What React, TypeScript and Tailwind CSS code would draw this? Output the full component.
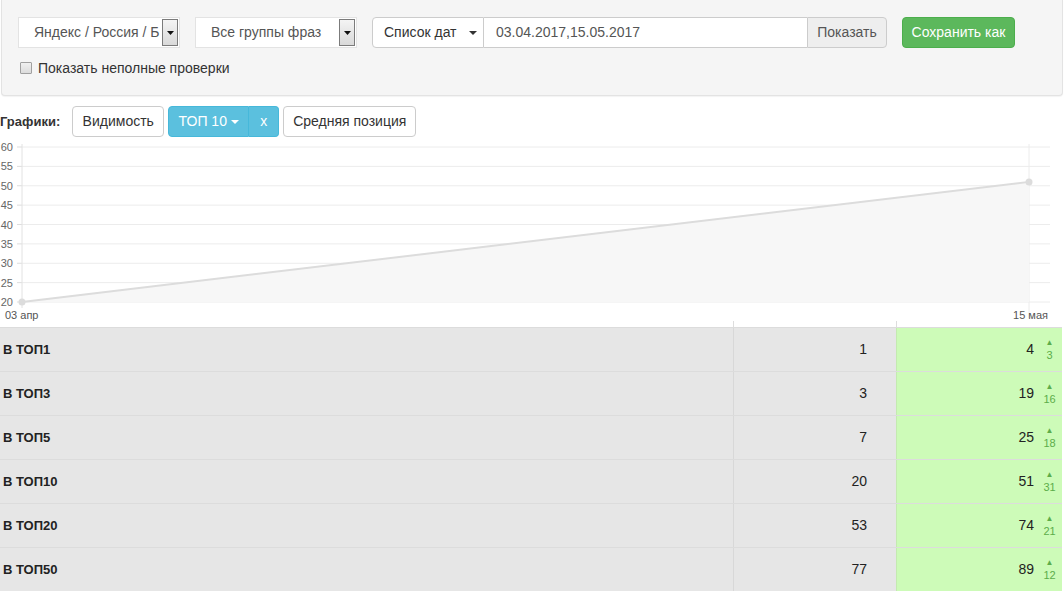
import React from "react";

const rows = [
  { name: "В ТОП1", a: "1", b: "4", d: "3" },
  { name: "В ТОП3", a: "3", b: "19", d: "16" },
  { name: "В ТОП5", a: "7", b: "25", d: "18" },
  { name: "В ТОП10", a: "20", b: "51", d: "31" },
  { name: "В ТОП20", a: "53", b: "74", d: "21" },
  { name: "В ТОП50", a: "77", b: "89", d: "12" },
];

function FakeSelect({ label, width }: { label: string; width: string }) {
  return (
    <div className={`relative h-[31px] ${width} bg-white border border-[#e3e3e3] flex items-center`}>
      <span className="pl-[15px] text-[14px] text-[#555]">{label}</span>
      <div className="absolute right-[1px] top-[1px] bottom-[1px] w-[16px] border border-[#7b7b7b] bg-gradient-to-b from-[#f4f4f4] to-[#d9d9d9] flex items-center justify-center">
        <svg width="7" height="4" viewBox="0 0 7 4">
          <path d="M0 0 L7 0 L3.5 4 Z" fill="#111" />
        </svg>
      </div>
    </div>
  );
}

function Chart() {
  const yLabels = [60, 55, 50, 45, 40, 35, 30, 25, 20];
  const y = (v: number) => 162 - (v - 20) * 3.875;
  const x0 = 22;
  const x1 = 1029;
  return (
    <div className="h-[181px] w-full">
      <svg width="1064" height="181" viewBox="0 0 1064 181" className="block">
        {yLabels.map((v) => (
          <g key={v}>
            <line x1={x0} x2={1050} y1={y(v)} y2={y(v)} stroke="#ececec" strokeWidth="1" />
            <line x1={17} x2={x0} y1={y(v)} y2={y(v)} stroke="#ddd" strokeWidth="1" />
            <text x={13} y={y(v) + 4} textAnchor="end" fontSize="11" fill="#666" fontFamily="'Liberation Sans', Arial, sans-serif">
              {v}
            </text>
          </g>
        ))}
        <line x1={x0} x2={x0} y1={4} y2={168} stroke="#e2e2e2" strokeWidth="1" />
        <line x1={x1} x2={x1} y1={4} y2={178} stroke="#ececec" strokeWidth="1" />
        <path d={`M${x0} ${y(20)} L${x1} ${y(51)} L${x1} ${y(20)} Z`} fill="#f7f7f7" />
        <line x1={x0} y1={y(20)} x2={x1} y2={y(51)} stroke="#dcdcdc" strokeWidth="2" />
        <circle cx={x0} cy={y(20)} r="3.5" fill="#dcdcdc" />
        <circle cx={x1} cy={y(51)} r="3.5" fill="#dcdcdc" />
        <text x={5} y={179} fontSize="11" fill="#555" fontFamily="'Liberation Sans', Arial, sans-serif">
          03 апр
        </text>
        <text x={1048} y={179} textAnchor="end" fontSize="11" fill="#555" fontFamily="'Liberation Sans', Arial, sans-serif">
          15 мая
        </text>
      </svg>
    </div>
  );
}

export default function App() {
  return (
    <div className="w-[1064px] h-[594px] overflow-hidden bg-white text-[#333]" style={{ fontFamily: "'Liberation Sans', Arial, sans-serif" }}>
      {/* Top panel */}
      <div className="h-[96px] ml-[1px] mr-[1px] bg-[#f5f5f5] border border-t-0 border-[#e3e3e3] rounded-b-[4px] shadow-[0_1px_1px_rgba(0,0,0,0.05)] pt-[17px] pl-[16px]">
        <div className="flex items-center h-[31px]">
          <FakeSelect label="Яндекс / Россия / Б" width="w-[162px]" />
          <div className="w-[15px]" />
          <FakeSelect label="Все группы фраз" width="w-[162px]" />
          <div className="w-[15px]" />
          <div className="flex h-[31px]">
            <div className="w-[112px] h-full bg-white border border-[#ccc] rounded-l-[4px] flex items-center pl-[11px] text-[14px] text-[#333]">
              Список дат
              <svg className="ml-[12px]" width="8" height="4" viewBox="0 0 8 4">
                <path d="M0 0 L8 0 L4 4 Z" fill="#333" />
              </svg>
            </div>
            <div className="w-[323px] h-full bg-white border-y border-[#ccc] flex items-center pl-[12px] text-[14px] text-[#555]">
              03.04.2017,15.05.2017
            </div>
            <div className="w-[80px] h-full bg-[#eee] border border-[#ccc] rounded-r-[4px] flex items-center justify-center text-[14px] text-[#555]">
              Показать
            </div>
          </div>
          <div className="w-[15px]" />
          <div className="w-[113px] h-full bg-[#5cb85c] border border-[#4cae4c] rounded-[4px] flex items-center justify-center text-[14px] text-white">
            Сохранить как
          </div>
        </div>
        <div className="flex items-center mt-[13px] h-[14px]">
          <div className="w-[12px] h-[12px] ml-[2px] border border-[#a0a0a0] bg-gradient-to-b from-[#f0f0f0] to-[#dcdcdc] rounded-[1px]" />
          <span className="ml-[6px] text-[14px] text-[#333]">Показать неполные проверки</span>
        </div>
      </div>

      {/* Charts buttons */}
      <div className="flex items-center mt-[10px] h-[31px]">
        <span className="font-bold text-[13px] text-[#333]">Графики:</span>
        <div className="ml-[12px] h-[31px] w-[92px] border border-[#ccc] rounded-[4px] bg-white flex items-center justify-center text-[14px] text-[#333]">
          Видимость
        </div>
        <div className="ml-[4px] flex h-[31px]">
          <div className="w-[81px] h-full bg-[#5bc0de] border border-[#46b8da] rounded-l-[4px] flex items-center justify-center text-[14px] text-white">
            ТОП 10
            <svg className="ml-[4px]" width="8" height="4" viewBox="0 0 8 4">
              <path d="M0 0 L8 0 L4 4 Z" fill="#fff" />
            </svg>
          </div>
          <div className="w-[30px] h-full bg-[#5bc0de] border border-l-0 border-[#46b8da] rounded-r-[4px] flex items-center justify-center text-[14px] text-white">
            x
          </div>
        </div>
        <div className="ml-[4px] h-[31px] w-[133px] border border-[#ccc] rounded-[4px] bg-white flex items-center justify-center text-[14px] text-[#333]">
          Средняя позиция
        </div>
      </div>

      <div className="mt-[3px]">
        <Chart />
      </div>

      {/* Table */}
      <div className="w-[1062px]">
        <div className="flex h-[6px]">
          <div className="w-[733px]" />
          <div className="w-[163px] border-l border-[#ddd]" />
          <div className="w-[166px] border-l border-[#ddd]" />
        </div>
        {rows.map((r) => (
          <div key={r.name} className="flex h-[44px] border-t border-[#dcdcdc]">
            <div className="w-[733px] bg-[#e6e6e6] flex items-center pl-[3px] font-bold text-[13px] text-[#222]">
              {r.name}
            </div>
            <div className="w-[163px] bg-[#e6e6e6] border-l border-[#d8d8d8] flex items-center justify-end pr-[29px] text-[14px] text-[#222]">
              {r.a}
            </div>
            <div className="w-[166px] bg-[#cdfbb8] border-l border-[#c4eab0] flex items-center justify-end pr-[6px]">
              <span className="text-[14px] text-[#222]">{r.b}</span>
              <div className="ml-[9px] w-[13px] flex flex-col items-center leading-none text-[#5cad4a]">
                <span className="text-[8px] leading-[9px]">▲</span>
                <span className="text-[11px] leading-[12px] mt-[2px]">{r.d}</span>
              </div>
            </div>
          </div>
        ))}
      </div>
    </div>
  );
}
